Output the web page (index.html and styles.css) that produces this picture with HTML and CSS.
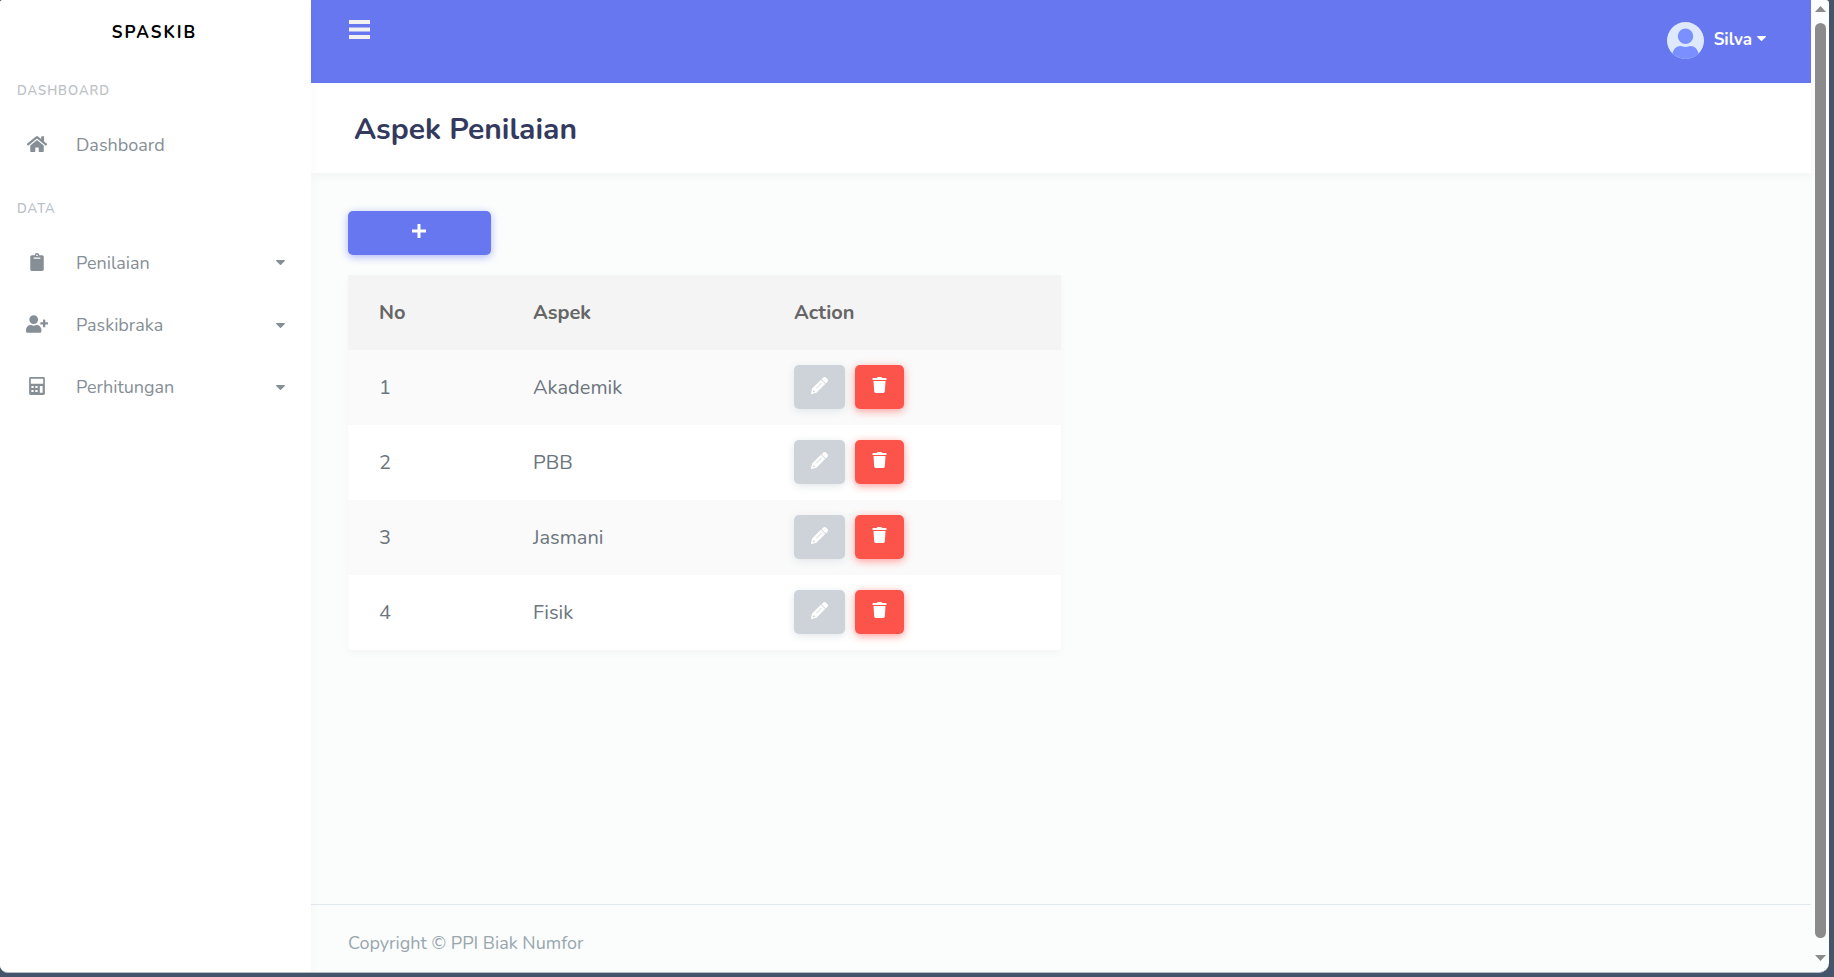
FILE: index.html
```html
<!DOCTYPE html>
<html lang="id">
<head>
<meta charset="utf-8">
<title>Aspek Penilaian</title>
<link rel="stylesheet" href="styles.css">
</head>
<body>
<svg class="defs" aria-hidden="true">
  <symbol id="pencil" viewBox="0 0 16 16"><path fill-rule="evenodd" d="M11.400.600a2 2 0 0 1 2.700 0l1.300 1.300a2 2 0 0 1 0 2.700l-1.500 1.500-4-4zM9.300 2.700l4 4-8.200 8.200L.6 16a.5.5 0 0 1-.6-.6l1-4.500zM9.700 5.500 4.800 10.400l.4.400 4.900-4.900zM2.200 12.400l-.5 1.900 1.900-.5v-.9h-.8z"/></symbol>
  <symbol id="trash" viewBox="0 0 14 16"><path d="M13.500 1h-3.800L9.200.3A1 1 0 0 0 8.400 0H5.600a1 1 0 0 0-.8.3L4.300 1H.5a.5.5 0 0 0-.5.500v1a.5.5 0 0 0 .5.500h13a.5.5 0 0 0 .5-.5v-1a.5.5 0 0 0-.5-.5zM1 4l.7 10.600A1.500 1.500 0 0 0 3.200 16h7.600a1.500 1.500 0 0 0 1.500-1.400L13 4z"/></symbol>
  <symbol id="caret" viewBox="0 0 9 5"><path d="M.6 0h7.800c.5 0 .8.500.4.900L5 4.700a.7.7 0 0 1-1 0L.2.900C-.2.500.1 0 .6 0z"/></symbol>
</svg>
<div class="window">
  <aside class="sidebar">
    <a class="brand" href="#">SPASKIB</a>
    <nav>
      <h2 class="menu-header">Dashboard</h2>
      <a class="menu-item" href="#">
        <svg class="menu-icon" viewBox="0 0 576 512"><path d="M280 148 96 300v164a16 16 0 0 0 16 16h112a16 16 0 0 0 16-16v-96a16 16 0 0 1 16-16h64a16 16 0 0 1 16 16v96a16 16 0 0 0 16 16h112a16 16 0 0 0 16-16V300L296 148a12 12 0 0 0-16 0zM572 251l-84-69V44a12 12 0 0 0-12-12h-56a12 12 0 0 0-12 12v73l-90-74a48 48 0 0 0-61 0L4 251a12 12 0 0 0-2 17l26 31a12 12 0 0 0 17 2L280 107a12 12 0 0 1 16 0l235 194a12 12 0 0 0 17-2l26-31a12 12 0 0 0-2-17z"/></svg>
        <span>Dashboard</span>
      </a>
      <h2 class="menu-header">Data</h2>
      <a class="menu-item" href="#">
        <svg class="menu-icon" viewBox="0 0 384 512"><path fill-rule="evenodd" d="M384 112v352c0 27-21 48-48 48H48c-27 0-48-21-48-48V112c0-27 21-48 48-48h80a64 64 0 0 1 128 0h80c27 0 48 21 48 48zM192 40a24 24 0 1 0 0 48 24 24 0 0 0 0-48zM288 154v-20a6 6 0 0 0-6-6H102a6 6 0 0 0-6 6v20a6 6 0 0 0 6 6h180a6 6 0 0 0 6-6z"/></svg>
        <span>Penilaian</span>
        <svg class="caret"><use href="#caret"/></svg>
      </a>
      <a class="menu-item" href="#">
        <svg class="menu-icon" viewBox="0 0 640 512"><path d="M624 208h-64v-64a16 16 0 0 0-16-16h-32a16 16 0 0 0-16 16v64h-64a16 16 0 0 0-16 16v32a16 16 0 0 0 16 16h64v64a16 16 0 0 0 16 16h32a16 16 0 0 0 16-16v-64h64a16 16 0 0 0 16-16v-32a16 16 0 0 0-16-16zM224 256a128 128 0 1 0 0-256 128 128 0 0 0 0 256zM314 288h-17a174 174 0 0 1-146 0h-17A134 134 0 0 0 0 422v42a48 48 0 0 0 48 48h352a48 48 0 0 0 48-48v-42a134 134 0 0 0-134-134z"/></svg>
        <span>Paskibraka</span>
        <svg class="caret"><use href="#caret"/></svg>
      </a>
      <a class="menu-item" href="#">
        <svg class="menu-icon" viewBox="0 0 448 512"><path fill-rule="evenodd" d="M40 0h368a40 40 0 0 1 40 40v432a40 40 0 0 1-40 40H40a40 40 0 0 1-40-40V40A40 40 0 0 1 40 0zM48 48v144h352V48zM64 256v56h64v-56zM176 256v56h64v-56zM64 368v56h64v-56zM176 368v56h64v-56zM304 256v192h80V256z"/></svg>
        <span>Perhitungan</span>
        <svg class="caret"><use href="#caret"/></svg>
      </a>
    </nav>
  </aside>
  <div class="page">
    <header class="navbar">
      <button class="toggle" aria-label="Menu"><svg viewBox="0 0 21 19"><path d="M0 0h21v4H0zM0 7.500h21v4H0zM0 15h21v4H0z"/></svg></button>
      <button class="user">
        <svg class="avatar" viewBox="0 0 37 37"><circle cx="18.500" cy="18.500" r="18.500" fill="#dfe9fe"/><circle cx="18.500" cy="14.300" r="7.700" fill="#7a90ff"/><path d="M5.400 31.500c1-4.500 4-7.500 8-7.500 1.800 0 2.800 1 5.100 1s3.300-1 5.100-1c4 0 7 3 8 7.500a18.500 18.500 0 0 1-26.200 0z" fill="#7a90ff"/></svg>
        <span>Silva</span>
        <svg class="caret"><use href="#caret"/></svg>
      </button>
    </header>
    <div class="section-header"><h1>Aspek Penilaian</h1></div>
    <main class="content">
      <button class="btn add" aria-label="Tambah"><svg viewBox="0 0 14 14"><path d="M5.500 0h3v5.500H14v3H8.500V14h-3V8.500H0v-3h5.500z"/></svg></button>
      <table class="card">
        <thead><tr><th class="no">No</th><th class="aspek">Aspek</th><th>Action</th></tr></thead>
        <tbody>
          <tr><td>1</td><td>Akademik</td><td><div class="actions"><button class="btn edit" aria-label="Edit"><svg><use href="#pencil"/></svg></button><button class="btn delete" aria-label="Hapus"><svg><use href="#trash"/></svg></button></div></td></tr>
          <tr><td>2</td><td>PBB</td><td><div class="actions"><button class="btn edit" aria-label="Edit"><svg><use href="#pencil"/></svg></button><button class="btn delete" aria-label="Hapus"><svg><use href="#trash"/></svg></button></div></td></tr>
          <tr><td>3</td><td>Jasmani</td><td><div class="actions"><button class="btn edit" aria-label="Edit"><svg><use href="#pencil"/></svg></button><button class="btn delete" aria-label="Hapus"><svg><use href="#trash"/></svg></button></div></td></tr>
          <tr><td>4</td><td>Fisik</td><td><div class="actions"><button class="btn edit" aria-label="Edit"><svg><use href="#pencil"/></svg></button><button class="btn delete" aria-label="Hapus"><svg><use href="#trash"/></svg></button></div></td></tr>
        </tbody>
      </table>
    </main>
    <footer class="footer">Copyright © PPI Biak Numfor</footer>
  </div>
  <div class="scrollbar" aria-hidden="true">
    <svg viewBox="0 0 11 6"><path d="M5.500 0 11 6H0z"/></svg>
    <div class="thumb"></div>
    <svg viewBox="0 0 11 6"><path d="M5.500 6 11 0H0z"/></svg>
  </div>
</div>
</body>
</html>
```
FILE: styles.css
```css
* { box-sizing: border-box; }

body {
  margin: 0;
  height: 100vh;
  padding: 0 5px 4px 0;
  background: #44546a;
  font-family: Nunito, Lato, sans-serif;
  font-size: 20px;
  color: #6c757d;
}

.defs { position: absolute; width: 0; height: 0; }
svg { display: block; fill: currentColor; }
h1, h2 { margin: 0; }
a { color: inherit; text-decoration: none; }
button { border: 0; padding: 0; font: inherit; cursor: pointer; }

.window {
  display: flex;
  height: 100%;
  overflow: hidden;
  background: #fbfdfc;
  border-radius: 3px 3px 10px 8px;
  border-bottom: 1px solid #b5bcc3;
}

/* Sidebar */
.sidebar {
  flex: 0 0 311px;
  z-index: 1;
  background: #fff;
  box-shadow: 0 4px 10px rgba(0, 0, 0, 0.03);
}
.brand {
  display: flex;
  align-items: center;
  justify-content: center;
  height: 58px;
  padding: 6px 2px 0 0;
  font-size: 17px;
  font-weight: 700;
  letter-spacing: 2px;
  color: #000;
}
.menu-header {
  height: 55px;
  padding: 12px 17px 0;
  line-height: 43px;
  font-size: 13px;
  font-weight: 600;
  letter-spacing: 1px;
  text-transform: uppercase;
  color: #bcc1c6;
}
.menu-item {
  display: flex;
  align-items: center;
  height: 63px;
  padding: 0 26px;
  font-size: 18px;
  color: #868e96;
}
.menu-item + .menu-item { height: 62px; }
.menu-icon { width: 22px; height: 18px; margin: 0 28px 2px 0; }
.caret { width: 9px; height: 5px; }
.menu-item .caret { margin-left: auto; }

/* Page */
.page { flex: 1; display: flex; flex-direction: column; min-width: 0; }
.navbar {
  display: flex;
  align-items: flex-start;
  justify-content: space-between;
  height: 83px;
  padding: 20px 45px 0 38px;
  background: #6777ef;
}
.toggle { background: none; color: #f2f2f2; }
.toggle svg { width: 21px; height: 19px; }
.user {
  display: flex;
  align-items: center;
  background: none;
  color: #fff;
  font-size: 17px;
  font-weight: 700;
}
.avatar { width: 37px; height: 37px; margin: 2px 10px 0 0; }
.user .caret { margin: 0 0 3px 5px; }

.section-header {
  display: flex;
  align-items: center;
  height: 90px;
  padding: 2px 43px 0;
  background: #fff;
  box-shadow: 0 4px 8px rgba(0, 0, 0, 0.03);
}
.section-header h1 { font-size: 30px; font-weight: 700; color: #34395e; }

.content { flex: 1; padding: 38px 37px; }

.btn {
  display: flex;
  justify-content: center;
  height: 44px;
  padding-top: 12px;
  border-radius: 5px;
  color: #fff;
}
.add { width: 143px; padding: 13px 2px 0 0; background: #6777ef; box-shadow: 0 2px 8px #acb5f6; }
.add svg { width: 14px; height: 14px; }

.card {
  width: 713px;
  margin-top: 20px;
  border-collapse: collapse;
  table-layout: fixed;
  background: #fff;
  border-radius: 0 0 4px 4px;
  box-shadow: 0 4px 8px rgba(0, 0, 0, 0.03);
}
.card th, .card td { height: 75px; padding: 0 0 0 31px; text-align: left; }
.card th { background: #f4f4f4; color: #666; font-weight: 700; }
.card tbody tr:nth-child(odd) { background: #fafafa; }
.no { width: 154px; }
.aspek { width: 261px; }
.actions { display: flex; gap: 10px; padding-bottom: 2px; }
.edit { width: 51px; background: #cdd3d8; box-shadow: 0 2px 8px #e1e5e8; }
.edit svg { width: 17px; height: 17px; }
.delete { width: 49px; background: #fc544b; box-shadow: 0 2px 8px #fd9b96; }
.delete svg { width: 15px; height: 16px; }

.footer {
  height: 68px;
  padding: 0 37px;
  border-top: 1px solid #e3eaef;
  line-height: 76px;
  font-size: 18px;
  color: #98a6ad;
}

/* Scrollbar */
.scrollbar {
  flex: 0 0 18px;
  display: flex;
  flex-direction: column;
  align-items: center;
  gap: 11px;
  padding: 6px 0 11px;
  color: #8b8b8b;
}
.scrollbar svg { width: 11px; height: 6px; }
.scrollbar svg:last-child { margin-top: 6px; }
.thumb { flex: 1; width: 11px; border-radius: 6px; background: currentColor; }
```
